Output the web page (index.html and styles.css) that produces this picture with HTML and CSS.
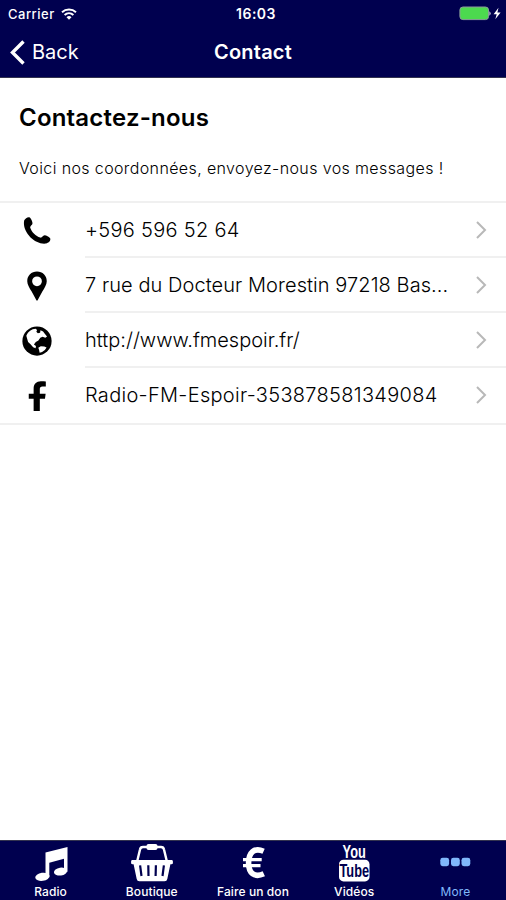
FILE: index.html
```
<!DOCTYPE html>
<html lang="fr">

<head>
    <meta charset="UTF-8">
    <meta name="viewport" content="width=device-width, initial-scale=1.0">
    <title>Contact</title>
    <link rel="stylesheet" href="styles.css">
</head>

<body>
    <header class="header">
        <div class="status">
            <div class="carrier">
                <span>Carrier</span>
                <svg width="16" height="12" viewBox="0 0 16 12" fill="none" stroke="#fff" stroke-width="2">
                    <path d="M1 4.2a10.5 10.5 0 0 1 14 0M3.6 7a6.6 6.6 0 0 1 8.8 0" />
                    <path d="M8 11.8L5.5 9.2a3.7 3.7 0 0 1 5 0z" fill="#fff" stroke="none" />
                </svg>
            </div>
            <div class="time">16:03</div>
            <div class="battery">
                <svg width="43" height="15" viewBox="0 0 43 15">
                    <rect x="0.9" y="1" width="28.6" height="12.6" rx="3" fill="#4cd94f" stroke="#8c9a9c" />
                    <path d="M30.3 5.2a2.6 2.6 0 0 1 0 4.6z" fill="#c9c9d8" />
                    <path d="M39.5 1.8L34.6 8.2h3.1l-1.4 5 5.3-6.8h-3.2z" fill="#fff" />
                </svg>
            </div>
        </div>
        <div class="navbar">
            <a class="back">
                <svg width="15" height="25" viewBox="0 0 15 25" fill="none" stroke="#fff" stroke-width="3.4">
                    <path d="M13.5 1.5L2.5 12.5l11 11" />
                </svg>
                <span>Back</span>
            </a>
            <div class="title">Contact</div>
        </div>
    </header>

    <main class="content">
        <h1>Contactez-nous</h1>
        <p class="intro">Voici nos coordonnées, envoyez-nous vos messages !</p>
        <ul class="list">
            <li>
                <svg class="icon" viewBox="0 0 32 32">
                    <path d="M2.4 4.6C3.6 2.6 6.4.6 8.6 1.8c1.5 1.8 2.5 4 2.6 6 0 2.1-2.8 2.7-2.4 4.6 1.5 4.6 6 9 10.6 10.6 2 .6 2.6-2.2 4.6-2.4 2.3.2 4.4 1.6 6 3 1.1 2.6-1.5 5-4.2 5.8C13.5 31.2-.4 16.5 2.4 4.6z" />
                </svg>
                <div class="item"><span class="text phone">+596 596 52 64</span></div>
            </li>
            <li>
                <svg class="icon" viewBox="0 0 32 32">
                    <path fill-rule="evenodd" d="M16 .6C10 .6 5.6 5 5.6 10.8c0 3.5 2.4 7.3 4.7 11.1L15.2 31q.8 1.3 1.6 0l4.9-9.1c2.3-3.8 4.7-7.6 4.7-11.1C26.4 5 22 .6 16 .6zm0 5.2a5.2 5.2 0 1 1 0 10.4 5.2 5.2 0 0 1 0-10.4z" />
                </svg>
                <div class="item"><span class="text address">7 rue du Docteur Morestin 97218 Bas...</span></div>
            </li>
            <li>
                <svg class="icon" viewBox="0 0 32 32">
                    <circle cx="16" cy="16" r="15.6" />
                    <path fill="#fff" d="M4.6 10.4C6.6 5.9 10.2 3.3 14.5 3l1.6 1.2-.8 2 1.6 1.6 2.4-.6.4-2.8 2.8 1.4 1.8 2.4 2.4 3-1.8 1.4-3-1.2-2.4 1-2 3-2.8 1.7-2 2.6 2.2 1.6-.4 2.4-2.6-1-2.8-3.2-2.6-2.4z" />
                    <path fill="#fff" d="M17.4 23.2l2.6-1.6 3.8.2 2.4 1.2-1.8 2.6-3 2-2.6 1-.6-3z" />
                </svg>
                <div class="item"><span class="text url">http://www.fmespoir.fr/</span></div>
            </li>
            <li>
                <svg class="icon" viewBox="0 0 32 32">
                    <path d="M25.4.4v5.4h-3.6c-2 0-2.8.9-2.8 2.8v5h6.2l-.7 5.2H19V32h-6.6V18.8H7.2v-5.2h5.2V8.2c0-5 2.9-8 7.7-8 2.2 0 3.9.1 5.3.2z" />
                </svg>
                <div class="item"><span class="text facebook">Radio-FM-Espoir-353878581349084</span></div>
            </li>
        </ul>
    </main>

    <nav class="tabs">
        <a class="tab">
            <svg width="40" height="40" viewBox="0 0 40 40" fill="#fff">
                <path fill-rule="evenodd" d="M14.5 9.5L36.5 4v24.8h-3.5V15.8l-14.7 3.9v14.5h-3.8z" />
                <ellipse cx="11.4" cy="33.8" rx="7.2" ry="4" transform="rotate(-8 11.4 33.8)" />
                <ellipse cx="29.5" cy="28.6" rx="6.6" ry="3.9" transform="rotate(-8 29.5 28.6)" />
            </svg>
            <span>Radio</span>
        </a>
        <a class="tab">
            <svg width="44" height="40" viewBox="0 0 44 40">
                <path fill="none" stroke="#fff" stroke-width="2.4" d="M7 19L10 6.5q.5-2.5 3-2.5h18q2.5 0 3 2.5L37 19" />
                <rect x="16.5" y="1" width="11" height="6" rx="2" fill="#fff" />
                <path fill="#fff" d="M2.5 17h39q1.4 0 1.4 1.4v1.5q0 1.4-1.4 1.4h-1.1l-3.1 14.6q-.4 2.3-2.7 2.3H9.4q-2.3 0-2.7-2.3L3.6 21.3H2.5q-1.4 0-1.4-1.4v-1.5Q1.1 17 2.5 17z" />
                <path stroke="#00004f" stroke-width="2.2" d="M10.1 22.3L11.5 33M18.3 22.3l.2 10.7M25.9 22.3L25.6 33M33.9 22.3L32.5 33" />
            </svg>
            <span class="boutique">Boutique</span>
        </a>
        <a class="tab">
            <svg width="40" height="40" viewBox="0 0 40 40" fill="none" stroke="#fff">
                <path stroke-width="5.6" d="M30.6 8.2C21 4 15.8 10 15.6 19.6c-.2 10.6 6 15.4 15.2 11.2" />
                <path stroke-width="3.4" d="M10 16.6h18.7M10 22.6h17.5" />
            </svg>
            <span class="don">Faire un don</span>
        </a>
        <a class="tab">
            <svg width="40" height="40" viewBox="0 0 40 40">
                <text class="logo" fill="#fff" transform="translate(20.2 14.8) scale(.8 1.15)">You</text>
                <rect x="5" y="16.8" width="30.5" height="21.6" rx="4.5" fill="#fff" />
                <text class="logo" fill="#00004f" transform="translate(20.3 34.2) scale(.8 1.15)">Tube</text>
            </svg>
            <span class="videos">Vidéos</span>
        </a>
        <a class="tab active">
            <svg width="40" height="40" viewBox="0 0 40 40" fill="#80b8fb">
                <rect x="5.3" y="14.8" width="8.8" height="8.4" rx="2.4" />
                <rect x="16" y="14.8" width="8.8" height="8.4" rx="2.4" />
                <rect x="26.5" y="14.8" width="8.8" height="8.4" rx="2.4" />
            </svg>
            <span class="more">More</span>
        </a>
    </nav>

    <script>
        // every row ends with the same chevron
        document.querySelectorAll('.item').forEach(item => {
            item.insertAdjacentHTML('beforeend',
                '<svg class="chevron" viewBox="0 0 11 18"><path d="M1 1l8 8-8 8"/></svg>');
        });
    </script>
</body>

</html>
```
FILE: styles.css
```
* {
    box-sizing: border-box;
}

body {
    margin: 0;
    height: 900px;
    display: flex;
    flex-direction: column;
    font-family: Inter, "Liberation Sans", sans-serif;
    background-color: white;
    color: #000;
    overflow: hidden;
}

.header {
    height: 78px;
    background-color: #00004f;
    border-bottom: 1px solid #33334f;
    color: white;
}

.status {
    height: 27px;
    display: grid;
    grid-template-columns: 1fr auto 1fr;
    align-items: center;
    padding: 0 4px 0 8px;
    font-size: 13px;
}

.carrier {
    display: flex;
    align-items: center;
    gap: 6px;
    font-weight: 500;
    letter-spacing: 0.5px;
}

.time {
    font-weight: 600;
    font-size: 14px;
    letter-spacing: 0.5px;
    padding-left: 2px;
}

.battery {
    display: flex;
    justify-content: flex-end;
}

.navbar {
    height: 50px;
    display: grid;
    grid-template-columns: 1fr auto 1fr;
    align-items: center;
    padding: 0 10px;
    font-size: 20px;
}

.back {
    display: flex;
    align-items: center;
    gap: 7px;
}

.title {
    font-weight: 600;
    letter-spacing: 0.2px;
}

.content {
    flex: 1;
}

h1 {
    margin: 25px 19px 0;
    font-size: 24px;
    line-height: 30px;
    font-weight: 600;
    letter-spacing: 0.2px;
}

.intro {
    margin: 24px 19px 22px;
    font-size: 16px;
    line-height: 22px;
    font-weight: 300;
    letter-spacing: 0.38px;
    white-space: nowrap;
}

.list {
    margin: 0;
    padding: 0;
    list-style: none;
    border-top: 2px solid #f0f0f0;
    border-bottom: 2px solid #f0f0f0;
}

.list li {
    display: flex;
    align-items: center;
    height: 55px;
    padding-left: 22px;
}

.icon {
    width: 30px;
    height: 30px;
    margin-right: 33px;
}

.item {
    flex: 1;
    height: 55px;
    display: flex;
    align-items: center;
    justify-content: space-between;
    padding-right: 19px;
    border-bottom: 2px solid #f0f0f0;
}

li:last-child .item {
    border-bottom-color: transparent;
}

.text {
    font-size: 20px;
    font-weight: 300;
    white-space: nowrap;
}

.phone,
.facebook {
    letter-spacing: 0.3px;
}

.address {
    letter-spacing: 0.07px;
}

.chevron {
    width: 11px;
    height: 18px;
    fill: none;
    stroke: #b8b8b8;
    stroke-width: 2;
}

.tabs {
    height: 60px;
    display: grid;
    grid-template-columns: repeat(5, 1fr);
    background-color: #00004f;
    border-top: 1px solid #33334f;
    color: white;
    font-size: 12px;
    font-weight: 500;
}

.tab {
    display: flex;
    flex-direction: column;
    align-items: center;
    padding-top: 2px;
    white-space: nowrap;
}

.tab svg {
    overflow: visible;
}

.tab span {
    line-height: 18px;
    letter-spacing: 0.1px;
}

.active {
    color: #80b8fb;
    font-weight: 400;
}

.logo {
    font-family: "Liberation Sans", sans-serif;
    font-size: 16px;
    font-weight: 700;
    text-anchor: middle;
}
```
